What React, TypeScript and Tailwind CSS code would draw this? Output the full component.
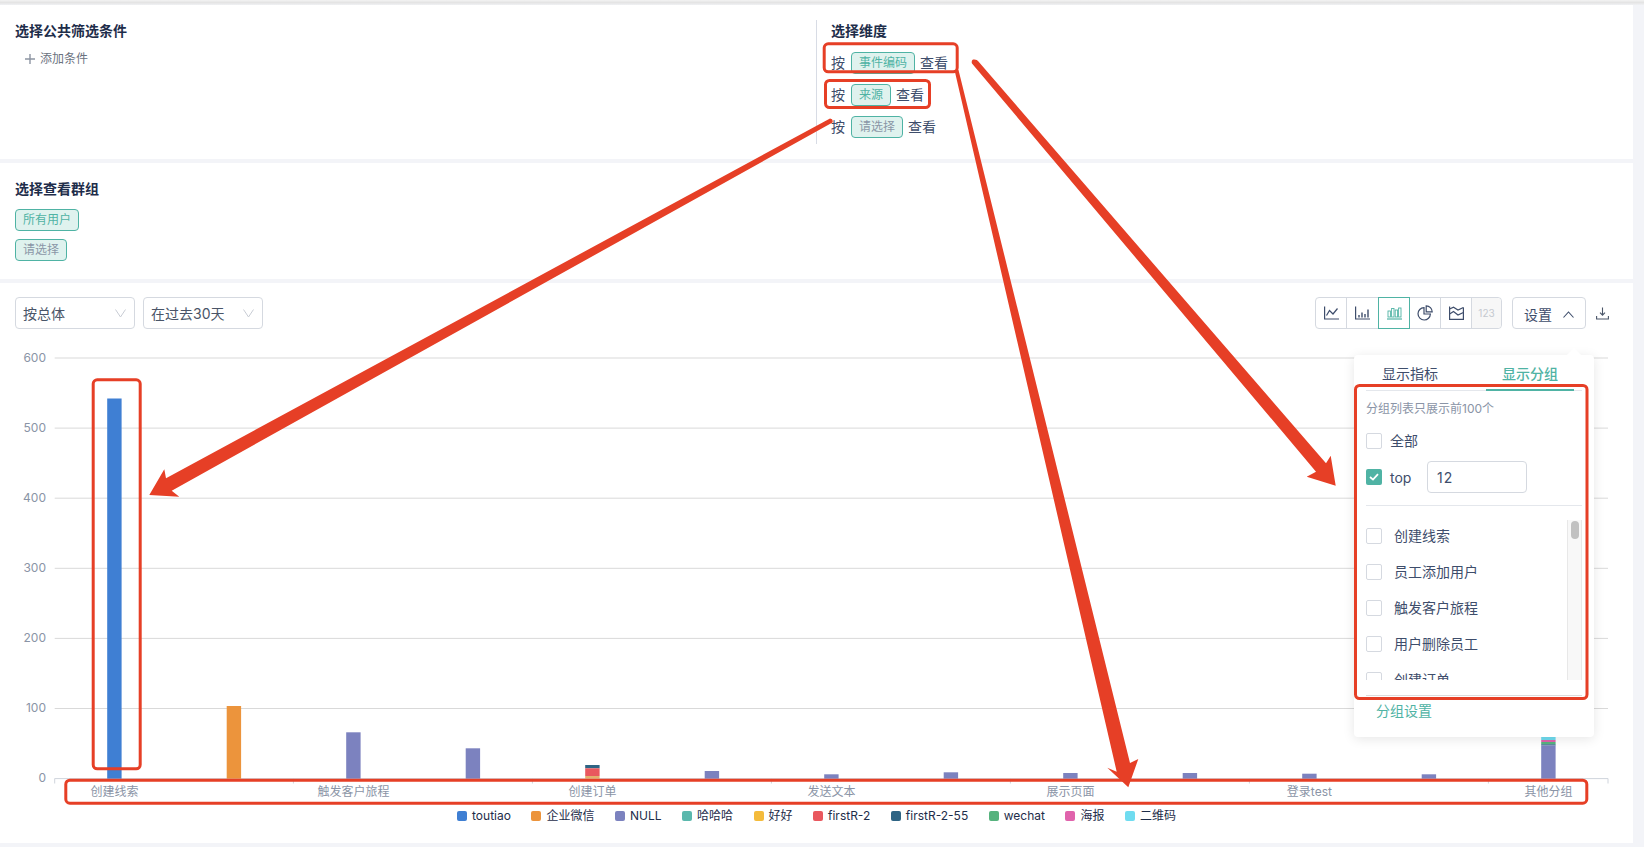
import React from "react";

const GROUP_TICKS = [54.7, 293.4, 532.4, 771.4, 1010.4, 1249.4, 1488.4, 1608];
const Y_LABELS = [600, 500, 400, 300, 200, 100, 0];
const X_LABELS = [
  { x: 114.4, label: "创建线索" },
  { x: 353.4, label: "触发客户旅程" },
  { x: 592.4, label: "创建订单" },
  { x: 831.4, label: "发送文本" },
  { x: 1070.4, label: "展示页面" },
  { x: 1309.4, label: "登录test" },
  { x: 1548.4, label: "其他分组" },
];

const BARS: { x: number; parts: { top: number; bottom: number; color: string }[] }[] = [
  { x: 114.4, parts: [{ top: 398.5, bottom: 778.7, color: "#3f7fd3" }] },
  { x: 233.9, parts: [{ top: 706, bottom: 778.7, color: "#ec943c" }] },
  { x: 353.4, parts: [{ top: 732.3, bottom: 778.7, color: "#7c82bf" }] },
  { x: 472.9, parts: [{ top: 748.3, bottom: 778.7, color: "#7c82bf" }] },
  {
    x: 592.4,
    parts: [
      { top: 765, bottom: 768.3, color: "#2e6484" },
      { top: 768.3, bottom: 776, color: "#e9585e" },
      { top: 776, bottom: 778.7, color: "#e3b06c" },
    ],
  },
  { x: 711.9, parts: [{ top: 771, bottom: 778.7, color: "#7c82bf" }] },
  { x: 831.4, parts: [{ top: 774.3, bottom: 778.7, color: "#7c82bf" }] },
  { x: 950.9, parts: [{ top: 772.3, bottom: 778.7, color: "#7c82bf" }] },
  { x: 1070.4, parts: [{ top: 773, bottom: 778.7, color: "#7c82bf" }] },
  { x: 1189.9, parts: [{ top: 773, bottom: 778.7, color: "#7c82bf" }] },
  { x: 1309.4, parts: [{ top: 773.7, bottom: 778.7, color: "#7c82bf" }] },
  { x: 1428.9, parts: [{ top: 774.3, bottom: 778.7, color: "#7c82bf" }] },
  {
    x: 1548.4,
    parts: [
      { top: 737, bottom: 740, color: "#6fdcf0" },
      { top: 740, bottom: 742, color: "#e063ac" },
      { top: 742, bottom: 744.3, color: "#57b37e" },
      { top: 744.3, bottom: 745.5, color: "#2e6484" },
      { top: 745.5, bottom: 778.7, color: "#7c82bf" },
    ],
  },
];

const LEGEND = [
  { label: "toutiao", color: "bg-[#3f7fd3]" },
  { label: "企业微信", color: "bg-[#ec943c]" },
  { label: "NULL", color: "bg-[#7c82bf]" },
  { label: "哈哈哈", color: "bg-[#5bb8ad]" },
  { label: "好好", color: "bg-[#f4bb3b]" },
  { label: "firstR-2", color: "bg-[#e9585e]" },
  { label: "firstR-2-55", color: "bg-[#2e6484]" },
  { label: "wechat", color: "bg-[#57b37e]" },
  { label: "海报", color: "bg-[#e063ac]" },
  { label: "二维码", color: "bg-[#6fdcf0]" },
];

const Tag = ({ children, muted }: { children: React.ReactNode; muted?: boolean }) => (
  <span
    className={`inline-flex h-[22px] items-center rounded-[4px] border border-[#4fb3a4] bg-[#dff2ee] px-[7px] text-[12px] ${
      muted ? "text-[#8a96a6]" : "text-[#4fb3a4]"
    }`}
  >
    {children}
  </span>
);

const DimensionRow = ({ children, muted }: { children: React.ReactNode; muted?: boolean }) => (
  <div className="flex h-[22px] items-center text-[14px] text-[#3e4d6b]">
    <span className="mr-[6px] -mt-[2px]">按</span>
    <Tag muted={muted}>{children}</Tag>
    <span className="ml-[5px] -mt-[2px]">查看</span>
  </div>
);

const Select = ({ label }: { label: string }) => (
  <div className="flex h-[32px] w-[120px] items-center justify-between rounded-[4px] border border-[#d5d9e0] pl-[7px] pr-[8px] text-[14px] text-[#4a5568]">
    <span>{label}</span>
    <svg width="11" height="9" viewBox="0 0 11 9" fill="none" stroke="#c8ccd4" strokeWidth="1">
      <path d="M0.5 0.5 L5.5 8 L10.5 0.5" />
    </svg>
  </div>
);

const Checkbox = ({ checked }: { checked?: boolean }) =>
  checked ? (
    <span className="flex h-[16px] w-[16px] shrink-0 items-center justify-center rounded-[2px] bg-[#4fb3a4]">
      <svg width="10" height="8" viewBox="0 0 10 8" fill="none" stroke="#ffffff" strokeWidth="1.8">
        <path d="M1 4 L4 6.6 L9 1.2" />
      </svg>
    </span>
  ) : (
    <span className="block h-[16px] w-[16px] shrink-0 rounded-[2px] border border-[#d5d9e0] bg-white" />
  );

const ChartTypeButtons = () => (
  <div className="flex h-[32px] w-[187px] rounded-[4px] border border-[#d5d9e0]">
    <div className="flex w-[31px] items-center justify-center border-r border-[#d5d9e0]">
      <svg width="15" height="14" viewBox="0 0 15 14" fill="none" stroke="#3e4d6b" strokeWidth="1.2">
        <path d="M0.6 0.5 V13 H15" />
        <path d="M2.5 9.5 L5.5 4.5 L9 8 L13.5 2.5" />
      </svg>
    </div>
    <div className="flex w-[31px] items-center justify-center">
      <svg width="15" height="14" viewBox="0 0 15 14" fill="none" stroke="#3e4d6b" strokeWidth="1.2">
        <path d="M0.6 0.5 V13 H15" />
        <path d="M4 11.5 V9 M7 11.5 V6.5 M10 11.5 V8 M13 11.5 V3.5" strokeWidth="1.4" />
      </svg>
    </div>
    <div className="-my-px flex w-[32px] items-center justify-center border border-[#4fb3a4]">
      <svg width="15" height="14" viewBox="0 0 15 14" fill="none" stroke="#4fb3a4" strokeWidth="0.9">
        <rect x="1" y="5" width="2.4" height="6" />
        <rect x="4.6" y="2.5" width="2.4" height="8.5" />
        <rect x="8.2" y="4" width="2.4" height="7" />
        <rect x="11.6" y="2" width="2.4" height="9" />
        <path d="M0 13 H15" strokeWidth="1.2" />
      </svg>
    </div>
    <div className="flex w-[31px] items-center justify-center border-r border-[#d5d9e0]">
      <svg width="16" height="16" viewBox="0 0 16 16" fill="none" stroke="#3e4d6b" strokeWidth="1.2">
        <path d="M7 2.6 A6.2 6.2 0 1 0 13.4 9 H7 Z" />
        <path d="M9.2 0.8 A6 6 0 0 1 15.2 6.8 H9.2 Z" />
      </svg>
    </div>
    <div className="flex w-[31px] items-center justify-center border-r border-[#d5d9e0]">
      <svg width="15" height="14" viewBox="0 0 15 14" fill="none" stroke="#3e4d6b" strokeWidth="1.2">
        <path d="M0.6 0.5 V13.4 H14.4 V1.5" />
        <path d="M0.6 3 L4.5 1.2 L9 4 L14.4 1.5" />
        <path d="M0.6 8 L4.5 5.5 L9 9 L14.4 6.5" />
      </svg>
    </div>
    <div className="flex flex-1 items-center justify-center rounded-r-[4px] bg-[#f7f7f7] text-[10px] text-[#c5c9d0]">123</div>
  </div>
);

const SettingsPopup = () => (
  <div className="absolute left-[1354px] top-[72px] h-[382px] w-[240px] rounded-[4px] bg-white px-[12px] shadow-[0_2px_12px_rgba(0,0,0,0.1)]">
    <div className="absolute left-[215px] top-[-5px] h-[10px] w-[10px] rotate-45 bg-white" />
    <div className="relative flex h-[36px] gap-[32px] border-b border-[#e4e7ec] text-[14px]">
      <div className="h-[36px] w-[88px] pt-[9px] text-center leading-[20px] text-[#3e4d6b]">显示指标</div>
      <div className="h-[36px] w-[88px] border-b-2 border-[#4fb3a4] pt-[9px] text-center font-medium leading-[20px] text-[#4fb3a4]">显示分组</div>
    </div>
    <div className="mt-[10px] text-[12px] leading-[16px] text-[#8a94a6]">分组列表只展示前100个</div>
    <div className="mt-[16px] flex h-[16px] items-center gap-[8px] text-[14px] text-[#3e4d6b]">
      <Checkbox />
      <span className="-mt-[2px]">全部</span>
    </div>
    <div className="mt-[12px] flex h-[32px] items-center text-[14px] text-[#3e4d6b]">
      <Checkbox checked />
      <span className="ml-[8px] w-[37px]">top</span>
      <div className="flex h-[32px] w-[100px] items-center rounded-[4px] border border-[#d5d9e0] pl-[9px] tracking-[1px]">12</div>
    </div>
    <div className="mt-[12px] border-t border-[#e4e7ec]" />
    <div className="relative mt-[14px] h-[160px] overflow-hidden">
      <div className="-mt-[2px] text-[14px] text-[#3e4d6b]">
        {["创建线索", "员工添加用户", "触发客户旅程", "用户删除员工", "创建订单"].map((item) => (
          <div key={item} className="flex h-[36px] items-center gap-[12px]">
            <Checkbox />
            <span className="-mt-[2px]">{item}</span>
          </div>
        ))}
      </div>
      <div className="absolute bottom-0 right-0 top-0 w-[15px] border-x border-[#e8e8e8] bg-[#f8f8f8]">
        <div className="ml-[3px] mt-[1px] h-[18px] w-[8px] rounded-[4px] bg-[#c1c1c1]" />
      </div>
    </div>
    <div className="mt-[15px] border-t border-[#dcdcdc]" />
    <div className="ml-[10px] mt-[5px] text-[14px] leading-[20px] text-[#4fb3a4]">分组设置</div>
  </div>
);

const Chart = () => (
  <svg width="1633" height="458" viewBox="0 346 1633 458" className="block">
    {Y_LABELS.map((value, i) => {
      const y = 358 + i * 70.1;
      return (
        <g key={value}>
          <line x1="54.7" x2="1608" y1={y} y2={y} stroke={value === 0 ? "#cfd4dc" : "#d9d9d9"} strokeWidth="1" />
          <text x="46" y={y + 3.5} textAnchor="end" fontSize="12" fill="#8a94a6">
            {value}
          </text>
        </g>
      );
    })}
    {GROUP_TICKS.map((x) => (
      <line key={x} x1={x} x2={x} y1="778.5" y2="783.5" stroke="#cfd4dc" strokeWidth="1" />
    ))}
    {BARS.map((bar) =>
      bar.parts.map((part) => (
        <rect key={`${bar.x}-${part.top}`} x={bar.x - 7.2} y={part.top} width="14.4" height={part.bottom - part.top} fill={part.color} />
      ))
    )}
    {X_LABELS.map((item) => (
      <text key={item.label} x={item.x} y="796" textAnchor="middle" fontSize="12" fill="#8a94a6">
        {item.label}
      </text>
    ))}
  </svg>
);

// the red marks somebody drew over the screenshot
const Annotations = () => (
  <svg width="1644" height="847" viewBox="0 0 1644 847" className="pointer-events-none absolute left-0 top-0" fill="none" stroke="#e63f26" strokeWidth="3">
    <rect x="824.2" y="43.8" width="133" height="28" rx="4" />
    <rect x="825.5" y="80.5" width="104" height="27" rx="4" />
    <rect x="93.2" y="379.8" width="47" height="389" rx="4" />
    <rect x="65.8" y="780.2" width="1521" height="23" rx="4" />
    <rect x="1355.5" y="385.5" width="231.5" height="313" rx="4" />
    <g fill="#e63f26" stroke="none">
      <path d="M830 118.5 L166 478.3 L164.3 469.3 L149.3 495 L179.3 496.7 L171.7 490.7 L832.5 122.5 Q833.5 119 830 118.5 Z" />
      <path d="M954.5 70 L958.5 70 L1130 763 L1138.3 759 L1128.3 787.3 L1107.3 767.7 L1116.7 771.7 Z" />
      <path d="M973 59.5 Q977 59 978 61 L1326 463.3 L1330.7 455.7 L1335.7 485.7 L1306.7 476.7 L1316 471.7 L972 63.5 Q971 61 973 59.5 Z" />
    </g>
  </svg>
);

export default function App() {
  return (
    <div className="relative h-[847px] w-[1644px] overflow-hidden bg-[#f3f4f8] font-['Inter','Noto_Sans_CJK_SC',sans-serif]">
      <div className="h-[5px] bg-gradient-to-b from-[#f3f3f3] via-[#e4e4e4] to-[#f0f1f4]" />

      <section className="flex h-[154px] w-[1633px] bg-white">
        <div className="w-[816px] pl-[15px] pt-[16px]">
          <h3 className="text-[14px] font-semibold leading-[20px] text-[#1e2d4a]">选择公共筛选条件</h3>
          <div className="ml-[10px] mt-[10px] flex items-center gap-[5px] text-[12px] leading-[16px] text-[#6b7280]">
            <svg width="10" height="10" viewBox="0 0 10 10" stroke="#8d95a3" strokeWidth="1.4">
              <path d="M5 0 V10 M0 5 H10" />
            </svg>
            添加条件
          </div>
        </div>
        <div className="mt-[15px] h-[124px] border-l border-[#d8dce5] pl-[14px] pt-[1px]">
          <h3 className="text-[14px] font-semibold leading-[20px] text-[#1e2d4a]">选择维度</h3>
          <div className="mt-[11px] flex flex-col gap-[10px]">
            <DimensionRow>事件编码</DimensionRow>
            <DimensionRow>来源</DimensionRow>
            <DimensionRow muted>请选择</DimensionRow>
          </div>
        </div>
      </section>

      <section className="mt-[4px] h-[116px] w-[1633px] bg-white pl-[15px] pt-[16px]">
        <h3 className="text-[14px] font-semibold leading-[20px] text-[#1e2d4a]">选择查看群组</h3>
        <div className="mt-[10px] flex flex-col items-start gap-[8px]">
          <Tag>所有用户</Tag>
          <Tag muted>请选择</Tag>
        </div>
      </section>

      <section className="relative mt-[4px] h-[560px] w-[1633px] bg-white pt-[14px]">
        <div className="flex items-center px-[15px]">
          <div className="flex gap-[8px]">
            <Select label="按总体" />
            <Select label="在过去30天" />
          </div>
          <div className="ml-auto">
            <ChartTypeButtons />
          </div>
          <div className="ml-[10px] flex h-[32px] w-[74px] items-center gap-[11px] rounded-[4px] border border-[#d5d9e0] pl-[11px] pt-[2px] text-[14px] text-[#3e4d6b]">
            设置
            <svg width="11" height="7" viewBox="0 0 11 7" fill="none" stroke="#3e4d6b" strokeWidth="1.1">
              <path d="M0.5 6.5 L5.5 1 L10.5 6.5" />
            </svg>
          </div>
          <svg className="ml-[10px] mr-[9px]" width="13" height="13" viewBox="0 0 13 13" fill="none" stroke="#4a5568" strokeWidth="1.1">
            <path d="M6.5 0.5 V8 M4 5.6 L6.5 8.2 L9 5.6 M0.6 9 V12 H12.4 V9" />
          </svg>
        </div>
        <div className="mt-[17px]">
          <Chart />
        </div>
        <div className="mt-[4px] flex h-[16px] items-center justify-center gap-[20.5px] text-[12px] text-[#1e2d4a]">
          {LEGEND.map((item) => (
            <div key={item.label} className="flex items-center gap-[5px]">
              <span className={`h-[10px] w-[10px] rounded-[2px] ${item.color}`} />
              {item.label}
            </div>
          ))}
        </div>
        <SettingsPopup />
      </section>

      <Annotations />
    </div>
  );
}
